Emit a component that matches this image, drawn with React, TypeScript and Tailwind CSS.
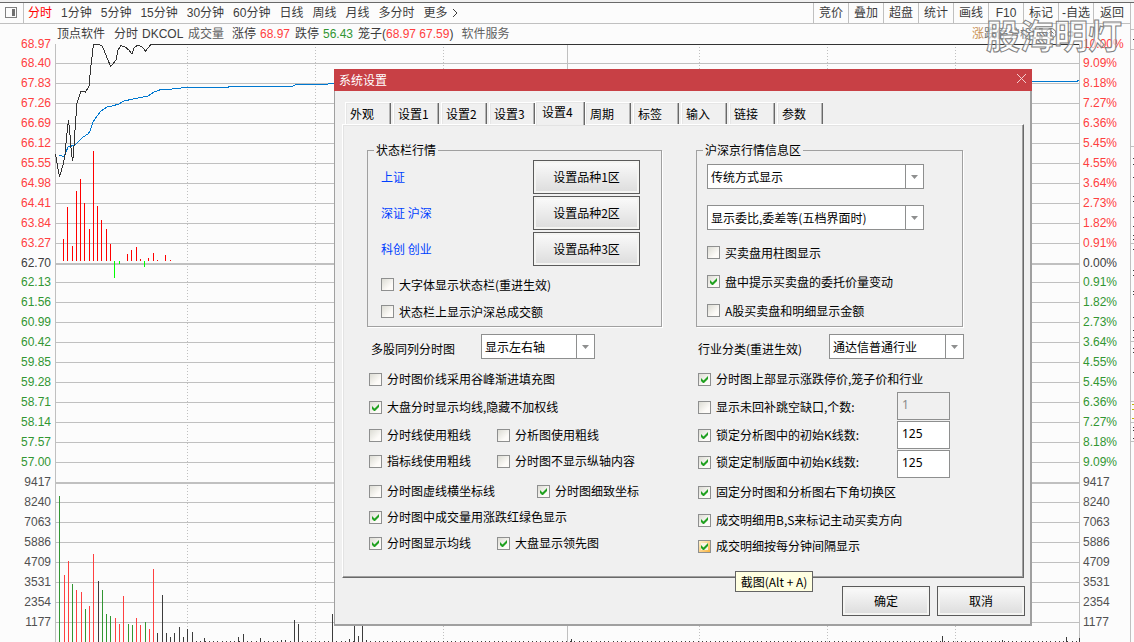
import { ComponentPropsWithoutRef, ReactNode, useState } from "react";
import clsx from "clsx";

const periods = [
  "分时",
  "1分钟",
  "5分钟",
  "15分钟",
  "30分钟",
  "60分钟",
  "日线",
  "周线",
  "月线",
  "多分时",
];

const tools = ["竞价", "叠加", "超盘", "统计", "画线", "F10", "标记", "-自选", "返回"];

const pricesUp = [
  "68.97", "68.40", "67.83", "67.26", "66.69", "66.12",
  "65.55", "64.98", "64.41", "63.84", "63.27",
];
const pricesDown = [
  "62.13", "61.56", "60.99", "60.42", "59.85",
  "59.28", "58.71", "58.14", "57.57", "57.00",
];
const percentsUp = [
  "10.00%", "9.09%", "8.18%", "7.27%", "6.36%", "5.45%",
  "4.55%", "3.64%", "2.73%", "1.82%", "0.91%",
];
const percentsDown = [
  "0.91%", "1.82%", "2.73%", "3.64%", "4.55%",
  "5.45%", "6.36%", "7.27%", "8.18%", "9.09%",
];
const volumes = ["9417", "8240", "7063", "5886", "4709", "3531", "2354", "1177"];

const gridLines = [
  63, 83, 103, 123, 143, 163, 183, 203, 223, 243, 282, 302, 322, 342, 362, 382,
  402, 422, 442, 462, 502, 522, 542, 562, 582, 602, 622,
];

// [x, y] end of each bar, drawn from the base line at 261
const strengthBars = [
  [63, 239], [67, 207], [72, 246], [76, 191], [80, 179], [84, 203], [89, 229],
  [93, 151], [97, 206], [101, 220], [106, 229], [110, 244], [114, 278],
  [119, 264], [127, 254], [131, 250], [136, 247], [140, 259], [144, 267],
  [148, 258], [153, 253], [157, 260], [165, 255], [170, 260],
];

const RED = "#ff4040";
const GREEN = "#329632";
const BLACK = "#3c3c3c";

const volumeBars: [number, number, string][] = [
  [59, 496, GREEN], [64, 575, RED], [68, 561, RED], [72, 584, GREEN],
  [76, 590, RED], [81, 592, RED], [85, 609, GREEN], [89, 606, RED],
  [93, 554, RED], [98, 581, BLACK], [102, 590, GREEN], [106, 614, GREEN],
  [110, 616, GREEN], [115, 618, RED], [119, 624, RED], [123, 596, RED],
  [128, 624, GREEN], [132, 625, GREEN], [136, 618, RED], [140, 625, RED],
  [145, 622, GREEN], [149, 629, RED], [153, 569, RED], [157, 633, BLACK],
  [162, 595, BLACK], [166, 633, BLACK], [170, 637, BLACK], [174, 633, BLACK],
  [179, 627, BLACK], [183, 637, BLACK], [187, 629, BLACK], [192, 632, BLACK],
  [204, 638, BLACK], [238, 637, BLACK], [243, 634, BLACK], [260, 638, BLACK],
  [281, 640, BLACK], [285, 640, BLACK], [294, 620, BLACK], [298, 624, BLACK],
  [332, 614, BLACK], [349, 639, BLACK], [354, 624, BLACK], [358, 636, BLACK],
  [362, 624, BLACK], [366, 640, BLACK], [571, 639, BLACK], [942, 636, BLACK],
  [1002, 640, BLACK], [1066, 637, BLACK], [1079, 638, BLACK],
];

function Chart() {
  return (
    <svg
      viewBox="55 44 1025 598"
      preserveAspectRatio="none"
      className="block h-[598px] w-full"
      shapeRendering="crispEdges"
      fill="none"
    >
      {gridLines.map((y) => (
        <rect key={y} x={55} y={y} width={1025} height={1} fill="#c0c0c0" />
      ))}
      <rect x={55} y={263} width={1025} height={2} fill="#c0c0c0" />
      <rect x={55} y={482} width={1025} height={2} fill="#c0c0c0" />
      {[187, 315, 443, 699, 827, 955].map((x) => (
        <path key={x} d={`M${x + 0.5} 47V642`} stroke="#c0c0c0" strokeDasharray="1 2" />
      ))}
      <rect x={567} y={44} width={1} height={598} fill="#c0c0c0" />
      <rect x={55} y={44} width={1} height={598} fill="#c0c0c0" />
      <rect x={1079} y={44} width={1} height={598} fill="#c0c0c0" />
      {strengthBars.map(([x, y]) => (
        <rect
          key={x}
          x={x}
          y={Math.min(y, 261)}
          width={1}
          height={Math.abs(261 - y)}
          fill={y > 261 ? "#00ff00" : "#ff0000"}
        />
      ))}
      <path d="M196 641.5H1079" stroke={BLACK} strokeDasharray="1 3.25" />
      {volumeBars.map(([x, y, color]) => (
        <rect key={x} x={x} y={y} width={1} height={642 - y} fill={color} />
      ))}
      <path
        d="M59.5 155 64 157 66 152 68 147 75 145 80 140 83 137 88 134 90 131 93 122 97 116 101 111 107 107 112 106 119 104 124 101 133 99 148 96 154 92 161 89.5 172 89 186 87.5 228 87.5 229 86.5 292 86.5 296 84.5 325 84.5 331 83.5 560 82.5 1076 81.5 1079 80.5"
        stroke="#0078d0"
      />
      <path
        d="M55.5 154 57 163 59.5 177 61 172 63 165 65 155 66.5 138 68.5 120 70 135 71 148 72.5 161 73.5 155 75 130 77 103 81 91 85.5 92 89 86 91 65 93.5 44.5 99 44.5 102 46 104 50 107 58 110.5 66 113 64 116 60 118 50 121 45.5 125 47 129 50 132 54 134 48 138 45 142 47 145.5 51 148 48 151 44.5H1079"
        stroke="#333"
      />
    </svg>
  );
}

interface AxisProps {
  up: string[];
  middle: string;
  down: string[];
  className?: string;
}

function Axis({ up, middle, down, className }: AxisProps) {
  return (
    <ul className={clsx("shrink-0 pt-[10px] leading-5", className)}>
      {up.map((item, index) => (
        <li key={item} className={clsx("text-[#ff4040]", index === 0 ? "h-[19px]" : "h-5")}>
          {item}
        </li>
      ))}
      <li className="h-[19px] text-[#3c3c3c]">{middle}</li>
      {down.map((item) => (
        <li key={item} className="h-5 text-[#329632]">
          {item}
        </li>
      ))}
      {volumes.map((item) => (
        <li key={item} className="h-5 text-[#505050]">
          {item}
        </li>
      ))}
    </ul>
  );
}

// Narrow slice of the quote panel that starts past the right axis
function SidePanel() {
  const rules = [29, 49, 146, 243, 341, 401, 422, 441];
  const marks = [
    39, 158, 164, 177, 196, 201, 217, 226, 235, 239, 249, 270, 275, 291, 294,
    317, 330, 337, 348, 352, 372, 427, 430, 438,
  ];
  return (
    <svg className="h-[639px] w-1 shrink-0" viewBox="0 3 4 639" shapeRendering="crispEdges">
      <rect x={0} y={3} width={1} height={639} fill="#c0c0c0" />
      {rules.map((y) => (
        <rect key={y} x={1} y={y} width={3} height={1} fill="#c0c0c0" />
      ))}
      {marks.map((y) => (
        <rect key={y} x={3} y={y} width={1} height={1} fill="#3c3c3c" />
      ))}
      {[404, 409, 418].map((y) => (
        <rect key={y} x={2} y={y} width={2} height={1} fill="#c0b000" />
      ))}
    </svg>
  );
}

interface CheckProps {
  label: string;
  checked?: boolean;
  hot?: boolean;
  className?: string;
}

function Check({ label, checked, hot, className }: CheckProps) {
  return (
    <label className={clsx("flex items-center gap-[5px] whitespace-nowrap", className)}>
      <span className="grid size-[13px] shrink-0">
        <input
          type="checkbox"
          defaultChecked={checked}
          className={clsx(
            "peer size-[13px] appearance-none border border-[#8e8f8f] bg-linear-to-br [grid-area:1/1]",
            hot ? "from-[#fff3d0] to-[#f8b330]" : "from-[#dcdcd4] to-[#fdfbf8] to-70%"
          )}
        />
        <svg
          viewBox="0 0 13 13"
          className="pointer-events-none invisible size-[13px] peer-checked:visible [grid-area:1/1]"
        >
          {hot && <path d="M3 3h7v7H3z" fill="#fbf5e6" />}
          <path d="M3 5v3l2 2h1l4-4V3L5.500 7.500z" fill="#21a121" />
        </svg>
      </span>
      {label}
    </label>
  );
}

interface SelectProps extends ComponentPropsWithoutRef<"select"> {
  value: string;
}

function Select({ value, className, ...props }: SelectProps) {
  return (
    <span className={clsx("relative flex h-[25px] border border-[#8e8f8f] bg-white", className)}>
      <select
        {...props}
        defaultValue={value}
        className="w-full appearance-none pl-[3px] pr-5 outline-none"
      >
        <option>{value}</option>
      </select>
      <span className="pointer-events-none absolute inset-y-0 right-0 flex w-[18px] items-center justify-center border-l border-[#8e8f8f]">
        <svg viewBox="0 0 7 4" className="h-1 w-[7px]">
          <path d="M0 0h7L3.500 4z" fill="#8e8f8f" />
        </svg>
      </span>
    </span>
  );
}

function PushButton({ className, children }: { className: string; children: ReactNode }) {
  return (
    <button
      type="button"
      className={clsx(
        "border border-[#5a5a5a] bg-linear-to-b from-[#fbfbfb] to-[#dcdcdc] shadow-[inset_0_0_0_2px_#f4f4f2]",
        className
      )}
    >
      {children}
    </button>
  );
}

function Group({ title, className, children }: { title: string; className: string; children: ReactNode }) {
  return (
    <fieldset className={clsx("h-[185px] border border-[#a0a0a0] shadow-[1px_1px_0_#fff]", className)}>
      <legend className="ml-[6px] h-4 px-0.5 leading-4">{title}</legend>
      {children}
    </fieldset>
  );
}

function NumberField(props: ComponentPropsWithoutRef<"input">) {
  return (
    <input
      type="text"
      {...props}
      className="h-7 w-[53px] border border-[#8e8f8f] bg-white px-1 pb-1 font-['Noto_Sans'] disabled:bg-[#f0f0f0] disabled:text-[#8a8a8a]"
    />
  );
}

const tabs = [
  "外观", "设置1", "设置2", "设置3", "设置4", "周期", "标签", "输入", "链接", "参数",
];

function Tabs() {
  const [active, setActive] = useState("设置4");

  return (
    <div role="tablist" className="flex items-end pl-[3px]">
      {tabs.map((tab) => (
        <button
          key={tab}
          type="button"
          role="tab"
          aria-selected={tab === active}
          onClick={() => setActive(tab)}
          className={clsx(
            "border-l border-t border-white text-left",
            tab === active
              ? "relative -mb-px -ml-0.5 h-6 w-[50px] bg-[#f0f0f0] pb-1 pl-[6px]"
              : "mr-0.5 h-[22px] w-[46px] pl-1",
            "shadow-[inset_-1px_0_0_#696969,inset_-2px_0_0_#b4b4b4,inset_1px_1px_0_#e6e6e6]"
          )}
        >
          {tab}
        </button>
      ))}
    </div>
  );
}

function StatusBarGroup() {
  const rows = ["上证", "深证 沪深", "科创 创业"];
  return (
    <Group title="状态栏行情" className="w-[295px]">
      <div className="flex flex-col gap-0.5 pl-[13px] pr-[21px] pt-0.5">
        {rows.map((row, index) => (
          <div key={row} className="flex items-center justify-between">
            <span className="text-[#0040ff]">{row}</span>
            <PushButton className="h-[34px] w-[107px]">设置品种{index + 1}区</PushButton>
          </div>
        ))}
      </div>
      <Check label="大字体显示状态栏(重进生效)" className="mt-[5px] h-[27px] pl-[13px]" />
      <Check label="状态栏上显示沪深总成交额" className="h-[27px] pl-[13px]" />
    </Group>
  );
}

function QuoteInfoGroup() {
  return (
    <Group title="沪深京行情信息区" className="w-[267px]">
      <div className="flex flex-col pl-[10px] pt-[6px]">
        <Select aria-label="信息区显示方式" value="传统方式显示" className="w-[217px]" />
        <Select
          aria-label="委比委差"
          value="显示委比,委差等(五档界面时)"
          className="mb-2 mt-4 w-[217px]"
        />
        <Check label="买卖盘用柱图显示" className="h-[29px]" />
        <Check label="盘中提示买卖盘的委托价量变动" checked className="h-[29px]" />
        <Check label="A股买卖盘和明细显示金额" className="h-[29px]" />
      </div>
    </Group>
  );
}

function SettingsDialog() {
  return (
    <section
      role="dialog"
      aria-labelledby="dialog-title"
      className="absolute left-[334px] top-[67px] flex h-[557px] w-[698px] flex-col border-b-2 border-l border-r-2 border-[#a0a0a0] bg-[#f0f0f0] font-['Noto_Sans_CJK_SC',sans-serif] text-black"
    >
      <header className="-ml-px -mr-0.5 flex h-[22px] shrink-0 items-center justify-between bg-[#c84045] pl-[5px] pr-[5px] text-white">
        <h2 id="dialog-title">系统设置</h2>
        <button type="button" aria-label="关闭" className="-mt-1">
          <svg viewBox="0 0 11 11" className="size-[11px]">
            <path d="M1 1l9 9M10 1l-9 9" stroke="#f3cfd0" />
          </svg>
        </button>
      </header>

      <div className="ml-[7px] mr-[6px] mt-[10px]">
        <Tabs />
        <div
          role="tabpanel"
          className="flex h-[454px] gap-[34px] border border-b-[#696969] border-l-white border-r-[#696969] border-t-white pl-6 pt-[17px] shadow-[inset_-1px_-1px_0_#a0a0a0,inset_1px_1px_0_#e3e3e3]"
        >
          <div>
            <StatusBarGroup />
            <div className="mt-[7px] flex h-[25px] items-center pl-1">
              <label htmlFor="axis-mode" className="w-[110px] pt-1">
                多股同列分时图
              </label>
              <Select id="axis-mode" value="显示左右轴" className="w-[114px]" />
            </div>
            <div className="mt-[7px] pl-0.5">
              <Check label="分时图价线采用谷峰渐进填充图" className="h-[26px]" />
              <Check label="大盘分时显示均线,隐藏不加权线" checked className="mt-0.5 h-[26px]" />
              <div className="mt-0.5 flex h-[26px]">
                <Check label="分时线使用粗线" className="w-32" />
                <Check label="分析图使用粗线" />
              </div>
              <div className="flex h-[26px]">
                <Check label="指标线使用粗线" className="w-32" />
                <Check label="分时图不显示纵轴内容" />
              </div>
              <div className="mt-1 flex h-[26px]">
                <Check label="分时图虚线横坐标线" className="w-[168px]" />
                <Check label="分时图细致坐标" checked />
              </div>
              <Check label="分时图中成交量用涨跌红绿色显示" checked className="h-[26px]" />
              <div className="flex h-[26px]">
                <Check label="分时图显示均线" checked className="w-32" />
                <Check label="大盘显示领先图" checked />
              </div>
            </div>
          </div>

          <div>
            <QuoteInfoGroup />
            <div className="mt-[7px] flex h-[25px] items-center pl-0.5">
              <label htmlFor="industry" className="w-[131px] pt-1">
                行业分类(重进生效)
              </label>
              <Select id="industry" value="通达信普通行业" className="w-[135px]" />
            </div>
            <div className="mt-[7px] flex pl-0.5">
              <div className="w-[199px]">
                <Check label="分时图上部显示涨跌停价,笼子价和行业" checked className="h-[26px]" />
                <Check label="显示未回补跳空缺口,个数:" className="mt-0.5 h-[26px]" />
                <Check label="锁定分析图中的初始K线数:" checked className="mt-0.5 h-[26px]" />
                <Check label="锁定定制版面中初始K线数:" checked className="mt-px h-[26px]" />
                <Check label="固定分时图和分析图右下角切换区" checked className="mt-1 h-[26px]" />
                <Check label="成交明细用B,S来标记主动买卖方向" checked className="mt-0.5 h-[26px]" />
                <Check label="成交明细按每分钟间隔显示" checked hot className="h-[26px]" />
              </div>
              <div className="flex flex-col gap-px pt-[26px]">
                <NumberField aria-label="缺口个数" defaultValue="1" disabled />
                <NumberField aria-label="分析图K线数" defaultValue="125" />
                <NumberField aria-label="定制版面K线数" defaultValue="125" />
              </div>
            </div>
          </div>
        </div>
      </div>

      <footer className="flex justify-end gap-[7px] pr-[5px] pt-2">
        <PushButton className="h-[30px] w-[88px]">确定</PushButton>
        <PushButton className="h-[30px] w-[88px]">取消</PushButton>
      </footer>

      <div
        role="tooltip"
        className="absolute left-[400px] top-[502px] h-[21px] w-[78px] whitespace-nowrap border border-[#646464] bg-[#ffffe1] text-center leading-[19px]"
      >
        截图(Alt + A)
      </div>
    </section>
  );
}

function Toolbar() {
  return (
    <nav className="flex h-[21px] items-center border-b border-[#c0c0c0]">
      <button
        type="button"
        aria-label="侧栏"
        className="flex h-full w-6 shrink-0 items-center justify-center border-r border-[#c0c0c0]"
      >
        <svg viewBox="0 0 13 12" className="h-3 w-[13px]" shapeRendering="crispEdges">
          <rect x=".5" y=".5" width="11" height="10" rx="1" fill="none" stroke="#808080" />
          <path d="M7 2h3v7H7z" fill="#707070" />
        </svg>
      </button>
      <div className="flex gap-[9px] whitespace-nowrap pl-1">
        {periods.map((item, index) => (
          <button key={item} type="button" className={clsx(index === 0 && "text-[#ff0000]")}>
            {item}
          </button>
        ))}
        <button type="button" className="flex items-center gap-1">
          更多
          <svg viewBox="0 0 6 10" className="h-[10px] w-[6px]">
            <path d="M1 1l4 4-4 4" fill="none" stroke="#3c3c3c" />
          </svg>
        </button>
      </div>
      <div className="ml-auto flex h-full">
        {tools.map((item) => (
          <button
            key={item}
            type="button"
            className="w-[35px] whitespace-nowrap border-l border-[#c0c0c0] last:w-[37px]"
          >
            {item}
          </button>
        ))}
      </div>
    </nav>
  );
}

function InfoBar() {
  return (
    <div className="flex h-5 items-center whitespace-nowrap pl-0.5">
      <span className="w-[57px]">顶点软件</span>
      <span className="w-7">分时</span>
      <span className="w-[46px]">DKCOL</span>
      <span className="w-11 text-[#606060]">成交量</span>
      <span className="w-7">涨停</span>
      <span className="w-[35px] text-[#ff4040]">68.97</span>
      <span className="w-7">跌停</span>
      <span className="w-[35px] text-[#329632]">56.43</span>
      <span>
        笼子(<span className="text-[#ff4040]">68.97 67.59</span>)
      </span>
      <a href="#service" className="pl-2 text-[#606060]">
        软件服务
      </a>
      <a href="#limit" className="ml-auto text-[#707478]">
        <span className="text-[#c89050]">涨</span>跌停分析
      </a>
      <svg
        viewBox="0 0 48 14"
        className="h-[14px] w-12 shrink-0"
        fill="none"
        stroke="#707070"
      >
        <path d="M1 5V2h3M7 2h3v3M10 8v3H7M4 11H1V8" strokeWidth="1.500" />
        <circle cx="19" cy="6.500" r="5" />
        <path d="M19 10V4M16.500 6.500 19 4l2.500 2.500" />
        <path d="M36 5h5v4h-5z" />
      </svg>
    </div>
  );
}

export default function App() {
  return (
    <main className="relative h-screen overflow-hidden border-t-2 border-[#f0f0f0] bg-[#fcfcfc] font-['Liberation_Sans','Noto_Sans_CJK_SC',sans-serif] text-[12px] leading-4 text-[#3c3c3c]">
      <div className="flex border-t border-[#696969]">
        <div className="min-w-0 flex-1">
          <Toolbar />
          <div className="flex">
            <Axis
              up={pricesUp}
              middle="62.70"
              down={pricesDown}
              className="w-[55px] pr-1 text-right"
            />
            <div className="min-w-0 flex-1">
              <InfoBar />
              <Chart />
            </div>
            <Axis
              up={percentsUp}
              middle="0.00%"
              down={percentsDown}
              className="w-[50px] pl-[3px]"
            />
          </div>
        </div>
        <SidePanel />
      </div>

      <div className="pointer-events-none absolute right-3 top-[9px] whitespace-nowrap font-['Noto_Sans_CJK_SC',sans-serif] text-[34px] font-bold leading-[48px] text-white/60 [-webkit-text-stroke:1px_#808080]">
        股海明灯
      </div>

      <SettingsDialog />
    </main>
  );
}
